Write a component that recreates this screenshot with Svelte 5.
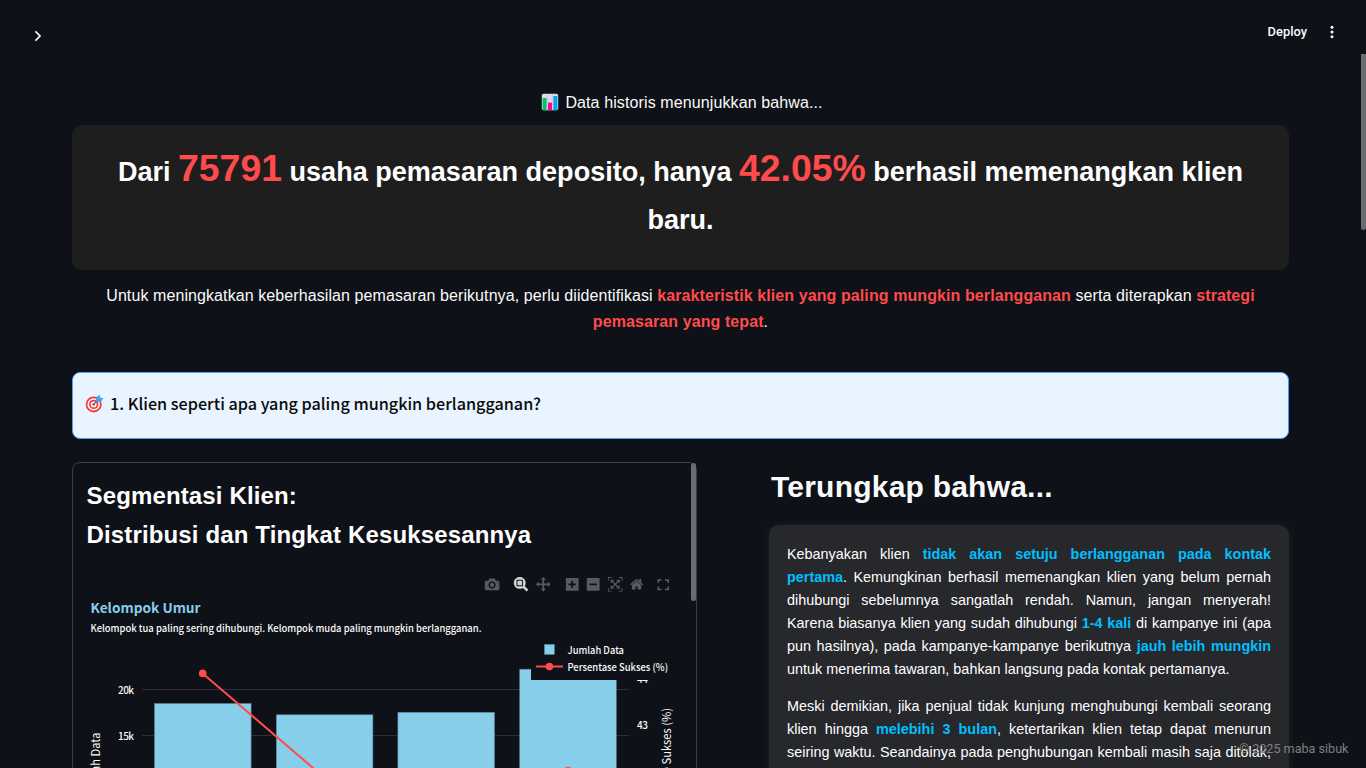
<script>
  const tools = [
    { x: 484.8, d: 'm500 450c-83 0-150-67-150-150 0-83 67-150 150-150 83 0 150 67 150 150 0 83-67 150-150 150z m400 150h-120c-16 0-34 13-39 29l-31 93c-6 15-23 28-40 28h-340c-16 0-34-13-39-28l-31-94c-6-15-23-28-40-28h-120c-55 0-100-45-100-100v-450c0-55 45-100 100-100h800c55 0 100 45 100 100v450c0 55-45 100-100 100z m-400-550c-138 0-250 112-250 250 0 138 112 250 250 250 138 0 250-112 250-250 0-138-112-250-250-250z m365 380c-19 0-35 16-35 35 0 19 16 35 35 35 19 0 35-16 35-35 0-19-16-35-35-35z' },
    { x: 513.8, active: true, d: 'm1000-25l-250 251c40 63 63 138 63 218 0 224-182 406-407 406-224 0-406-182-406-406s183-406 407-406c80 0 155 22 218 62l250-250 125 125z m-812 250l0 438 437 0 0-438-437 0z m62 375l313 0 0-312-313 0 0 312z' },
    { x: 536, d: 'm1000 350l-187 188 0-125-250 0 0 250 125 0-188 187-187-187 125 0 0-250-250 0 0 125-188-188 186-187 0 125 252 0 0-250-125 0 187-188 188 188-125 0 0 250 250 0 0-126 187 188z' },
    { x: 565.8, d: 'm1 787l0-875 875 0 0 875-875 0z m687-500l-187 0 0-187-125 0 0 187-188 0 0 125 188 0 0 187 125 0 0-187 187 0 0-125z' },
    { x: 586.8, d: 'm0 788l0-876 875 0 0 876-875 0z m688-500l-500 0 0 125 500 0 0-125z' },
    { x: 607.9, d: 'm250 850l-187 0-63 0 0-62 0-188 63 0 0 188 187 0 0 62z m688 0l-188 0 0-62 188 0 0-188 62 0 0 188 0 62-62 0z m-875-938l0 188-63 0 0-188 0-62 63 0 187 0 0 62-187 0z m875 188l0-188-188 0 0-62 188 0 62 0 0 62 0 188-62 0z m-125 188l-1 0-93-94-156 156 156 156 92-93 2 0 0 250-250 0 0-2 93-92-156-156-156 156 94 92 0 2-250 0 0-250 0 0 93 93 157-156-157-156-93 94 0 0 0-250 250 0 0 0-94 93 156 157 156-157-93-93 0 0 250 0 0 250z' },
    { x: 629.8, d: 'm786 296v-267q0-15-11-26t-25-10h-214v214h-143v-214h-214q-15 0-25 10t-11 26v267q0 1 0 2t0 2l321 264 321-264q1-1 1-4z m124 39l-34-41q-5-5-12-6h-2q-7 0-12 3l-386 322-386-322q-7-4-13-4-7 2-12 7l-35 41q-4 5-3 13t6 12l401 334q18 15 42 15t43-15l136-114v109q0 8 5 13t13 5h107q8 0 13-5t5-13v-227l122-102q5-5 6-12t-4-13z' }
  ];
  const bars = [
    { x: 154.5, y: 703.5 },
    { x: 276.3, y: 714.8 },
    { x: 397.9, y: 712.3 },
    { x: 519.7, y: 669.2 }
  ];
</script>

<div class="app">
  <header>
    <svg class="chev" width="20" height="20" viewBox="0 0 20 20"><path d="M7.5 5.4 L12 10 L7.5 14.6" fill="none" stroke="#fafafa" stroke-width="1.7" /></svg>
    <div class="actions">
      <span class="deploy">Deploy</span>
      <svg width="6" height="16" viewBox="0 0 6 16" fill="#fafafa"><circle cx="3" cy="3.3" r="1.5" /><circle cx="3" cy="8" r="1.5" /><circle cx="3" cy="12.7" r="1.5" /></svg>
    </div>
  </header>

  <main>
    <p class="intro">
      <svg width="18" height="18" viewBox="0 0 18 18">
        <rect x="0.8" y="0.8" width="16.4" height="16.4" rx="2" fill="#e3d9ec" />
        <path d="M6.2 1v16M11.6 1v16M1 6.2h16M1 11.6h16" stroke="#cdbfdd" stroke-width=".7" />
        <rect x="1.6" y="5" width="4" height="12.2" rx=".6" fill="#00c46a" />
        <rect x="7" y="9.5" width="4" height="7.7" rx=".6" fill="#f70a8d" />
        <rect x="12.4" y="3" width="4" height="14.2" rx=".6" fill="#00a6ed" />
      </svg><span>Data historis menunjukkan bahwa...</span>
    </p>

    <section class="hero">
      <h3>Dari <b>75791</b> usaha pemasaran deposito, hanya <b>42.05%</b> berhasil memenangkan klien baru.</h3>
    </section>

    <p class="lead">Untuk meningkatkan keberhasilan pemasaran berikutnya, perlu diidentifikasi <b>karakteristik klien yang paling mungkin berlangganan</b> serta diterapkan <b>strategi pemasaran yang tepat</b>.</p>

    <section class="question">
      <svg width="19" height="19" viewBox="0 0 19 19">
        <circle cx="8.7" cy="10.4" r="8" fill="#f8393b" />
        <circle cx="8.7" cy="10.4" r="6.2" fill="#fff" />
        <circle cx="8.7" cy="10.4" r="4.7" fill="#f8393b" />
        <circle cx="8.7" cy="10.4" r="2.9" fill="#fff" />
        <circle cx="8.7" cy="10.4" r="1.4" fill="#f8393b" />
        <path d="M8.3 10.7 L12.8 5.9" stroke="#1386d8" stroke-width="1.3" />
        <path d="M10.6 6.5 L11.8 2.8 L15 .7 L15.2 3.8 L18.4 4.2 L16.2 7.3 L12.7 8.2 Z" fill="#3aa7f2" />
      </svg>
      <span>1. Klien seperti apa yang paling mungkin berlangganan?</span>
    </section>

    <div class="columns">
      <section class="panel">
        <h4>Segmentasi Klien:<br />Distribusi dan Tingkat Kesuksesannya</h4>
        <svg class="chart" width="618" height="208" viewBox="73 560 618 208">
          {#each tools as t}
            <path d={t.d} transform="translate({t.x} 577) scale(.0146) matrix(1 0 0 -1 0 850)" fill={t.active ? '#d0d1d2' : '#585a60'} />
          {/each}
          <path d="M658.2 583v-3h3.2M665 580h3.2v3M668.2 586.5v3h-3.2M661.4 589.5h-3.2v-3" fill="none" stroke="#5d5f64" stroke-width="1.5" />

          <text x="90.5" y="613" class="title" textLength="110" lengthAdjust="spacingAndGlyphs">Kelompok Umur</text>
          <text x="90.5" y="632" class="small" textLength="391" lengthAdjust="spacingAndGlyphs">Kelompok tua paling sering dihubungi. Kelompok muda paling mungkin berlangganan.</text>

          <path d="M142 689.5H629M142 735.5H629" stroke="#2c2f38" />
          {#each bars as b}
            <rect x={b.x} y={b.y} width="96.6" height="120" fill="#87ceeb" stroke="#5a8195" stroke-width=".6" />
          {/each}
          <path d="M202.7 673.4L324.7 778L446 800L568 770.5" stroke="#ff4b4b" stroke-width="2" fill="none" />
          <circle cx="202.7" cy="673.4" r="3.8" fill="#ff4b4b" />
          <circle cx="568" cy="770.5" r="3.8" fill="#ff4b4b" />
          <text x="118" y="694" class="small" textLength="16">20k</text>
          <text x="118" y="740" class="small" textLength="16">15k</text>
          <text x="637" y="683" class="small" textLength="11">44</text>
          <text x="637" y="729" class="small" textLength="11">43</text>
          <text transform="translate(99.5 798) rotate(-90)" class="axis" textLength="65.5" lengthAdjust="spacingAndGlyphs">Jumlah Data</text>
          <text transform="translate(671 824) rotate(-90)" class="axis" textLength="116" lengthAdjust="spacingAndGlyphs">Persentase Sukses (%)</text>

          <rect x="531" y="641" width="144" height="39" fill="#0e1117" />
          <rect x="544.4" y="644.4" width="10" height="10" fill="#87ceeb" stroke="#5a8195" stroke-width=".6" />
          <path d="M536 666.5h27" stroke="#ff4b4b" stroke-width="2" />
          <circle cx="549.4" cy="666.5" r="3.8" fill="#ff4b4b" />
          <text x="567.5" y="654" class="small" textLength="56.5" lengthAdjust="spacingAndGlyphs">Jumlah Data</text>
          <text x="567.5" y="671" class="small" textLength="100.5" lengthAdjust="spacingAndGlyphs">Persentase Sukses (%)</text>
        </svg>
        <i class="panel-bar"></i>
      </section>

      <section class="findings">
        <h2>Terungkap bahwa...</h2>
        <div class="note">
          <p>Kebanyakan klien <b>tidak akan setuju berlangganan pada kontak pertama</b>. Kemungkinan berhasil memenangkan klien yang belum pernah dihubungi sebelumnya sangatlah rendah. Namun, jangan menyerah! Karena biasanya klien yang sudah dihubungi <b>1-4 kali</b> di kampanye ini (apa pun hasilnya), pada kampanye-kampanye berikutnya <b>jauh lebih mungkin</b> untuk menerima tawaran, bahkan langsung pada kontak pertamanya.</p>
          <p class="open">Meski demikian, jika penjual tidak kunjung menghubungi kembali seorang klien hingga <b>melebihi 3 bulan</b>, ketertarikan klien tetap dapat menurun seiring waktu. Seandainya pada penghubungan kembali masih saja ditolak,</p>
        </div>
      </section>
    </div>
  </main>
  <i class="page-bar"></i>
  <footer>© 2025 maba sibuk</footer>
</div>

<style>
  :global(body) { background: #0e1117; overflow: hidden; }
  * { box-sizing: border-box; }
  .app { position: relative; height: 768px; overflow: hidden; background: #0e1117; color: #fafafa; font-family: "Liberation Sans", Arial, sans-serif; }
  header { height: 60px; display: flex; justify-content: space-between; padding: 0 31px 0 28px; }
  .chev { margin-top: 26px; }
  .actions { display: flex; gap: 22px; padding-top: 24px; height: 40px; }
  .deploy { font: 500 12.9px/16px Roboto, sans-serif; }
  main { width: 1217px; margin-left: 72px; }
  p, h2, h3, h4 { margin: 0; }
  .intro { display: flex; justify-content: center; align-items: center; gap: 6px; height: 26px; margin-top: 30px; padding-left: 3px; font-size: 16px; letter-spacing: .11px; }
  .intro svg { margin-bottom: 2px; }
  .hero { height: 145px; margin-top: 9px; padding: 19px 20px; border-radius: 10px; background: #1e1e1e; text-align: center; }
  h3 { font-size: 27.05px; line-height: 48px; color: #fff; }
  h3 b { font-size: 37.4px; line-height: 48px; color: #ff4b4b; }
  .lead { margin-top: 13px; font-size: 16px; line-height: 25.6px; text-align: center; padding: 0 20px; letter-spacing: .09px; }
  .lead b { color: #ff4b4b; }
  .question { display: flex; align-items: center; gap: 6px; height: 67px; margin-top: 38px; padding: 0 0 4px 12px; border: 1px solid #4a9eff; border-radius: 8px; background: #e8f4ff; color: #0a0a0a; font: 500 16.2px/24px "Noto Sans CJK SC", sans-serif; }
  .question span { margin-bottom: 2px; }
  .columns { display: flex; align-items: flex-start; gap: 72px; margin-top: 23px; }
  .panel { position: relative; width: 625px; height: 340px; border: 1px solid #3d4045; border-radius: 8px; flex: none; }
  h4 { padding: 13px 0 0 13.5px; height: 97px; font-size: 24px; line-height: 39px; letter-spacing: .14px; color: #fff; }
  .chart { display: block; }
  .panel-bar { position: absolute; right: 0; top: 0; width: 5px; height: 138px; border-radius: 3px; background: #6b6c70; }
  .title { font: 700 13.5px "Noto Sans CJK SC", sans-serif; fill: #87ceeb; }
  .small { font: 500 10px "Noto Sans CJK SC", sans-serif; fill: #fafafa; }
  .axis { font: 400 11.5px "Noto Sans CJK SC", sans-serif; fill: #fafafa; }
  .findings { width: 520px; }
  h2 { height: 63px; padding: 6px 0 0 2px; font-size: 30px; line-height: 38px; letter-spacing: .22px; }
  .note { height: 400px; padding: 18px; border-radius: 10px; background: #27282c; box-shadow: 0 0 10px rgba(255, 255, 255, .06); }
  .note p { margin-bottom: 14px; font-size: 14.4px; line-height: 23px; text-align: justify; color: #fff; }
  .note .open { text-align-last: justify; }
  .note b { color: #00bfff; }
  .page-bar { position: absolute; right: 0; top: 54px; width: 5px; height: 176px; border-radius: 0 0 3px 3px; background: #6b6c70; }
  footer { position: absolute; right: 17.5px; bottom: 10px; font: 400 12.6px/18px Roboto, sans-serif; color: #808080; }
</style>
